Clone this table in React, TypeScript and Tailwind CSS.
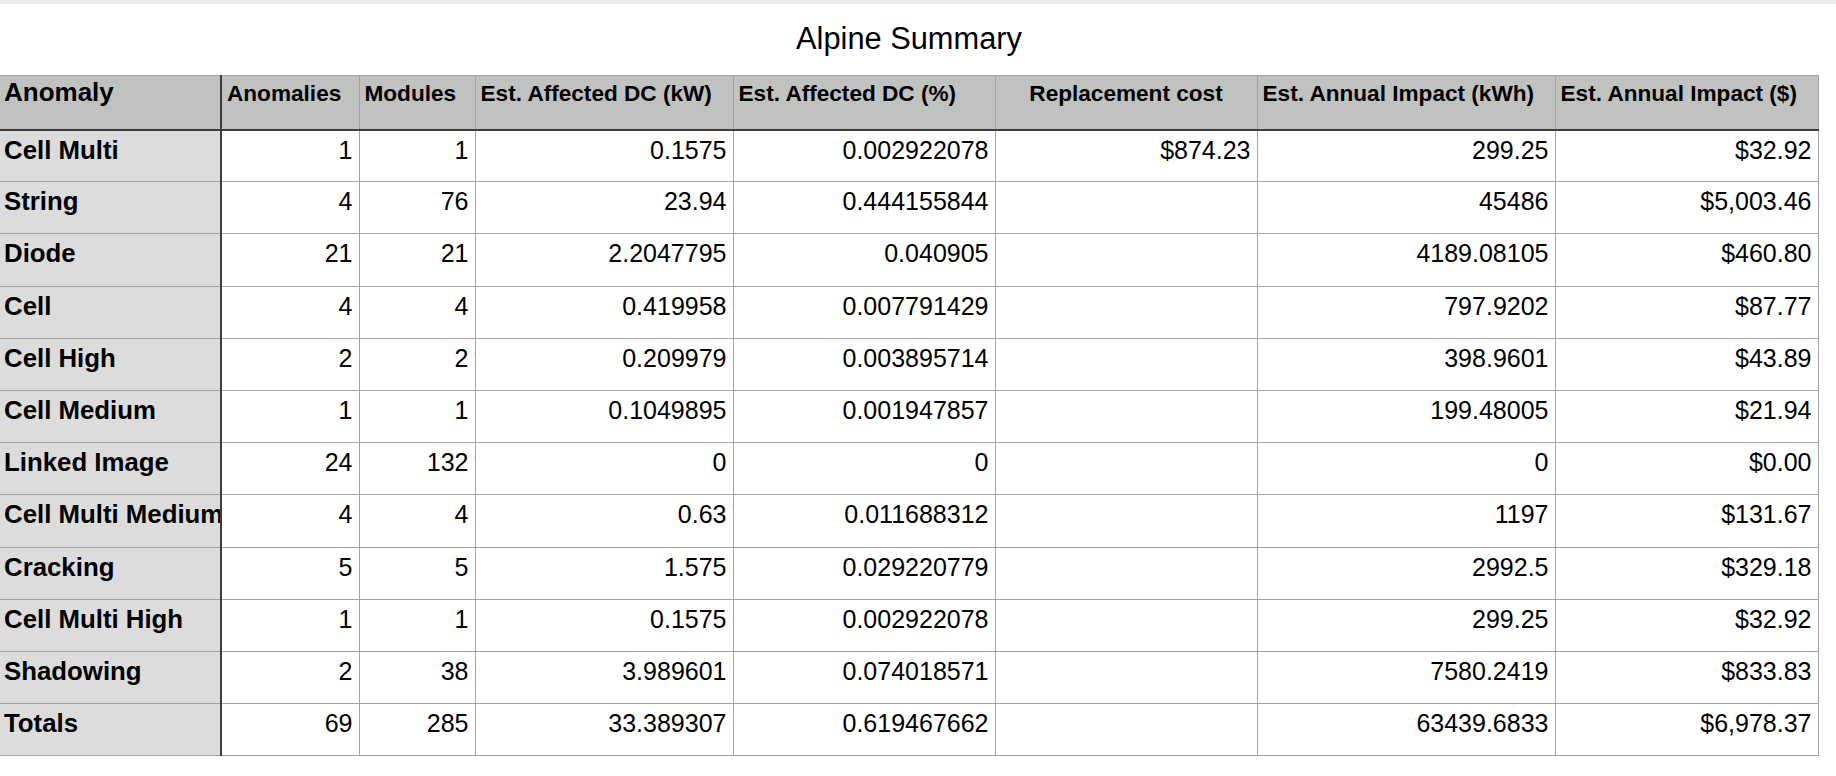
const cols = [221, 138, 116, 258, 262, 262, 298, 263];

const headers = [
  "Anomalies",
  "Modules",
  "Est. Affected DC (kW)",
  "Est. Affected DC (%)",
  "Replacement cost",
  "Est. Annual Impact (kWh)",
  "Est. Annual Impact ($)",
];

const rows: string[][] = [
  ["Cell Multi", "1", "1", "0.1575", "0.002922078", "$874.23", "299.25", "$32.92"],
  ["String", "4", "76", "23.94", "0.444155844", "", "45486", "$5,003.46"],
  ["Diode", "21", "21", "2.2047795", "0.040905", "", "4189.08105", "$460.80"],
  ["Cell", "4", "4", "0.419958", "0.007791429", "", "797.9202", "$87.77"],
  ["Cell High", "2", "2", "0.209979", "0.003895714", "", "398.9601", "$43.89"],
  ["Cell Medium", "1", "1", "0.1049895", "0.001947857", "", "199.48005", "$21.94"],
  ["Linked Image", "24", "132", "0", "0", "", "0", "$0.00"],
  ["Cell Multi Medium", "4", "4", "0.63", "0.011688312", "", "1197", "$131.67"],
  ["Cracking", "5", "5", "1.575", "0.029220779", "", "2992.5", "$329.18"],
  ["Cell Multi High", "1", "1", "0.1575", "0.002922078", "", "299.25", "$32.92"],
  ["Shadowing", "2", "38", "3.989601", "0.074018571", "", "7580.2419", "$833.83"],
  ["Totals", "69", "285", "33.389307", "0.619467662", "", "63439.6833", "$6,978.37"],
];

export default function App() {
  return (
    <div className="min-h-screen bg-white font-['Liberation_Sans',Arial,sans-serif] text-black">
      {/* window chrome strip */}
      <div className="h-[4px] bg-[#ececec]" />

      <div className="w-[1818px]">
        <div className="pt-[17px] pb-[19px] text-center text-[30.8px] leading-[35px]">Alpine Summary</div>

        <table className="w-[1818px] table-fixed border-collapse">
          <colgroup>
            {cols.map((w, i) => (
              <col key={i} style={{ width: w }} />
            ))}
          </colgroup>
          <thead>
            <tr className="h-[54px] bg-[#c0c2c0]">
              <th className="border-t border-r-2 border-b-2 border-t-[#a3a3a3] border-r-[#3d3d3d] border-b-[#3d3d3d] px-[4px] pt-[2px] text-left align-baseline text-[26px] font-bold leading-[1.15]">
                Anomaly
              </th>
              {headers.map((h, i) => (
                <th
                  key={h}
                  className={`border-t border-x border-b-2 border-t-[#a3a3a3] border-x-[#a3a3a3] border-b-[#3d3d3d] px-[5px] pt-[2px] align-baseline text-[22.6px] font-bold leading-[1.15] whitespace-nowrap ${
                    i === 4 ? "text-center" : "text-left"
                  }`}
                >
                  {h}
                </th>
              ))}
            </tr>
          </thead>
          <tbody>
            {rows.map((r) => (
              <tr key={r[0]} className="h-[52.2px]">
                <td className="border-b border-r-2 border-b-[#a3a3a3] border-r-[#3d3d3d] bg-[#dcdcdc] p-0 align-top">
                  <div className="overflow-hidden whitespace-nowrap pl-[4px] pt-[5px] text-[25.8px] font-bold leading-[1.15]">
                    {r[0]}
                  </div>
                </td>
                {r.slice(1).map((v, i) => (
                  <td
                    key={i}
                    className="border border-[#a3a3a3] pr-[6px] pl-[4px] pt-[5px] text-right align-top text-[25px] leading-[1.15] whitespace-nowrap"
                  >
                    {v}
                  </td>
                ))}
              </tr>
            ))}
          </tbody>
        </table>
      </div>
    </div>
  );
}
